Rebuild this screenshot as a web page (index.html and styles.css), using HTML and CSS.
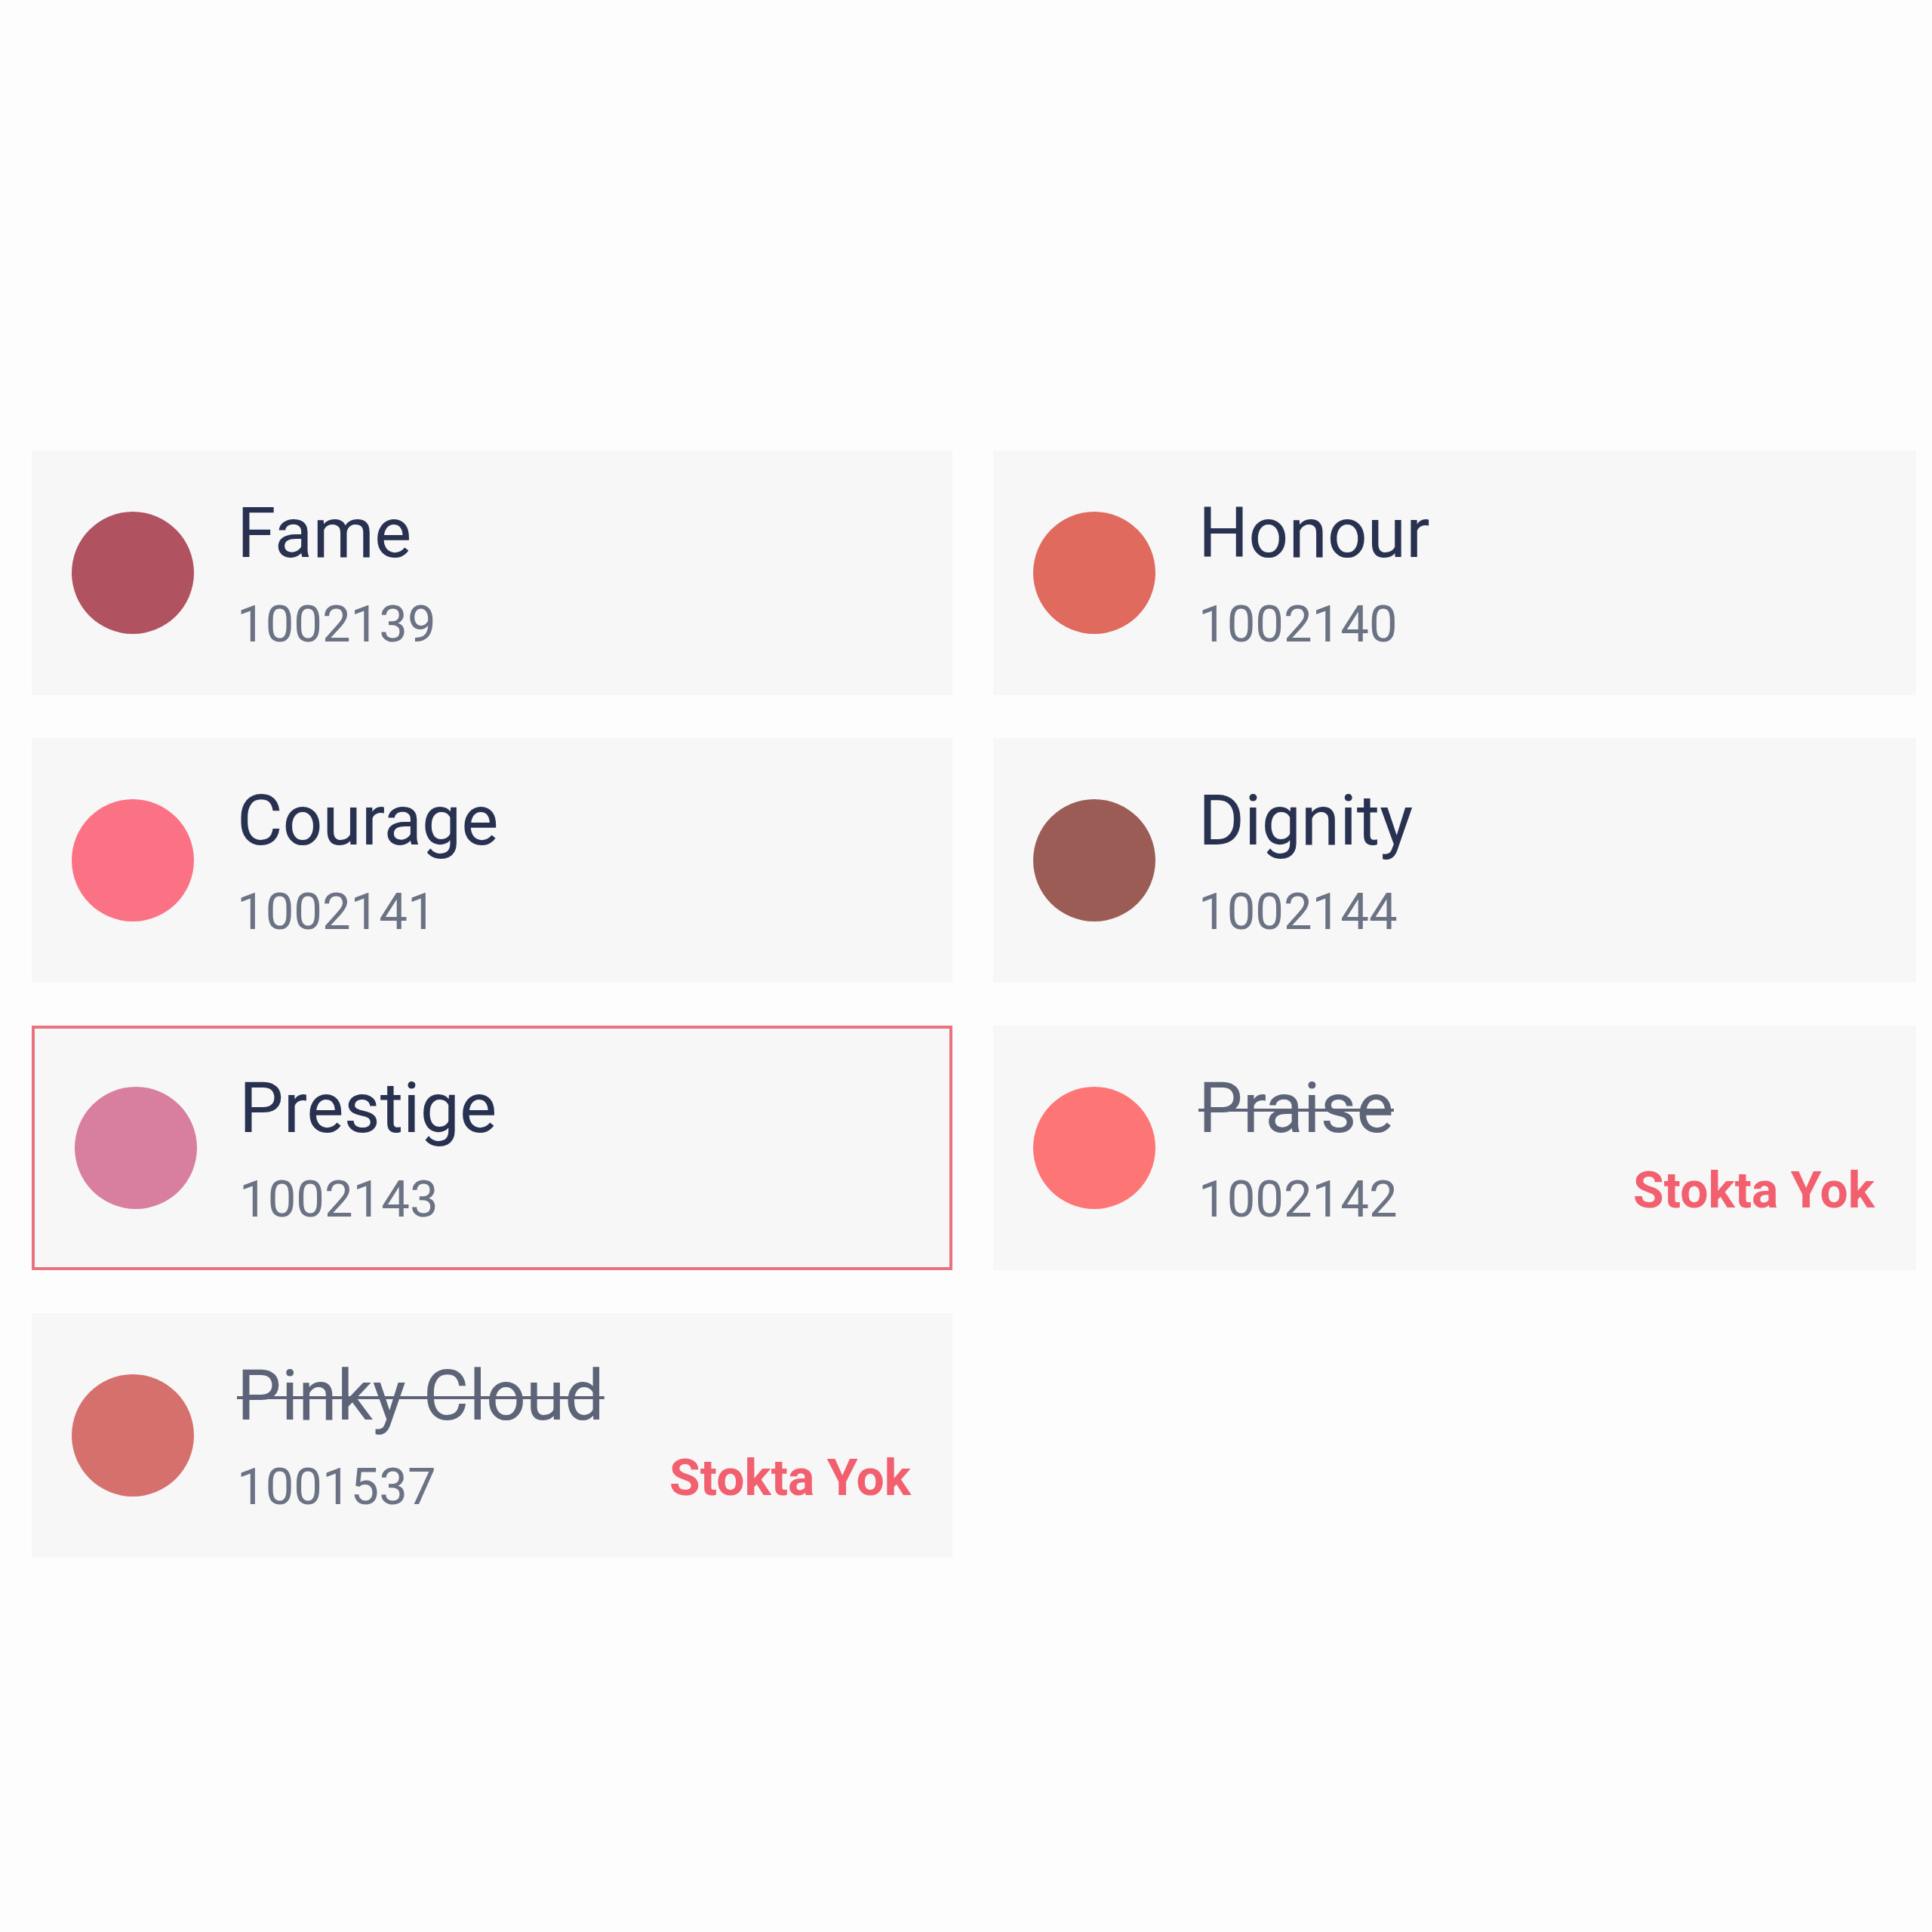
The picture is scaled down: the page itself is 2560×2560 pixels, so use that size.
FILE: index.html
```html
<!DOCTYPE html>
<html lang="tr">
<head>
<meta charset="utf-8">
<title>Renkler</title>
<link rel="stylesheet" href="styles.css">
</head>
<body>
<div class="grid">
  <div class="card">
    <span class="swatch" style="background:#b05260"></span>
    <div class="info"><div class="name">Fame</div><div class="code">1002139</div></div>
  </div>
  <div class="card">
    <span class="swatch" style="background:#e06a5e"></span>
    <div class="info"><div class="name">Honour</div><div class="code">1002140</div></div>
  </div>
  <div class="card">
    <span class="swatch" style="background:#fb7285"></span>
    <div class="info"><div class="name">Courage</div><div class="code">1002141</div></div>
  </div>
  <div class="card">
    <span class="swatch" style="background:#9b5c56"></span>
    <div class="info"><div class="name">Dignity</div><div class="code">1002144</div></div>
  </div>
  <div class="card selected">
    <span class="swatch" style="background:#d87fa0"></span>
    <div class="info"><div class="name">Prestige</div><div class="code">1002143</div></div>
  </div>
  <div class="card">
    <span class="swatch" style="background:#fe7575"></span>
    <div class="info"><div class="name out">Praise</div><div class="code">1002142</div></div>
    <span class="stock">Stokta Yok</span>
  </div>
  <div class="card">
    <span class="swatch" style="background:#d6706d"></span>
    <div class="info"><div class="name out">Pinky Cloud</div><div class="code">1001537</div></div>
    <span class="stock">Stokta Yok</span>
  </div>
</div>
</body>
</html>
```
FILE: styles.css
```css
html, body {
  margin: 0;
  padding: 0;
  background: #fdfdfd;
}
body {
  font-family: Roboto, "Noto Sans", sans-serif;
  width: 2560px;
  height: 2560px;
}
.grid {
  display: grid;
  grid-template-columns: 1220px 1223px;
  grid-auto-rows: 324px;
  column-gap: 54px;
  row-gap: 57px;
  padding: 597px 21px 0 42px;
}
.card {
  box-sizing: border-box;
  background: #f7f7f7;
  display: flex;
  align-items: center;
  padding: 0 55px 0 53px;
}
.card.selected {
  border: 4px solid #e8737f;
  padding: 0 53px 0 53px;
}
.swatch {
  width: 162px;
  height: 162px;
  border-radius: 50%;
  flex: none;
}
.info {
  margin-left: 57px;
  display: flex;
  flex-direction: column;
}
.selected .info {
  margin-left: 56px;
}
.name {
  font-size: 93px;
  line-height: 1.2;
  color: #283150;
  white-space: nowrap;
}
.name.out {
  color: #5d6478;
  text-decoration: line-through;
  text-decoration-thickness: 4px;
}
.code {
  font-size: 67px;
  line-height: 1.2;
  margin-top: 25px;
  color: #6b7284;
}
.stock {
  margin-left: auto;
  align-self: flex-end;
  margin-bottom: 66px;
  font-size: 66px;
  line-height: 1.2;
  font-weight: 700;
  color: #f2606f;
  white-space: nowrap;
}
```
